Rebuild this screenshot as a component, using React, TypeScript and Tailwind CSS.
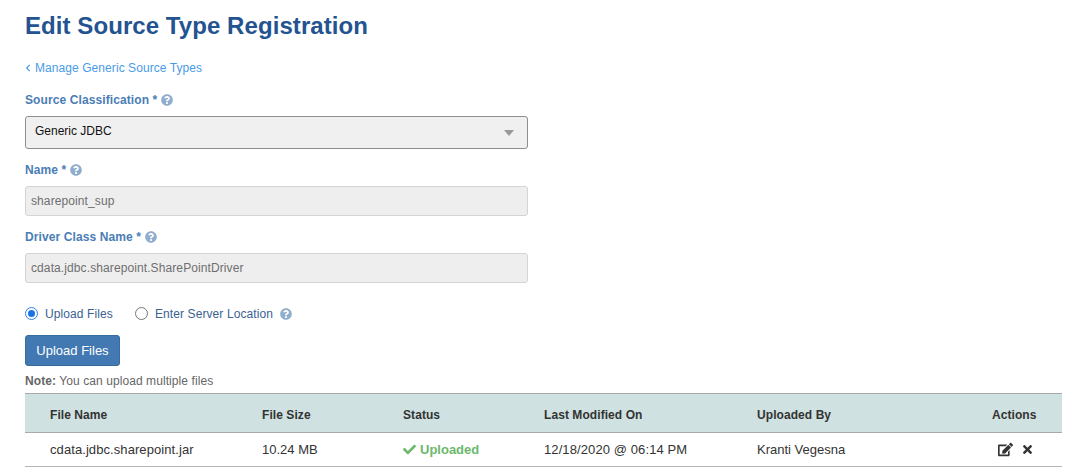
import { FaChevronLeft, FaQuestionCircle, FaCheck, FaEdit, FaTimes } from "react-icons/fa";

function Help({ className = "" }: { className?: string }) {
  return <FaQuestionCircle className={`inline-block text-[12px] text-[#8fadcc] ${className}`} />;
}

function Label({ text }: { text: string }) {
  return (
    <div className="flex h-[16px] items-center gap-[4px] text-[12px] leading-[16px] font-bold text-[#4a7db5]">
      <span className="tracking-[0.1px]">{text}</span>
      <Help />
    </div>
  );
}

function ReadOnly({ value }: { value: string }) {
  return (
    <div className="flex h-[30px] w-[503px] items-center rounded-[3px] border border-[#d4d4d4] bg-[#eeeeee] px-[5px] text-[12px] tracking-[0.1px] text-[#6f6f6f]">
      {value}
    </div>
  );
}

export default function App() {
  return (
    <div className="h-[472px] w-[1080px] overflow-hidden bg-white pt-[11px] pl-[25px] font-['Liberation_Sans',Arial,sans-serif]">
      <h1 className="h-[30px] text-[24px] leading-[30px] font-bold tracking-[0.07px] text-[#235390]">Edit Source Type Registration</h1>
      <a className="mt-[19px] flex h-[16px] items-center gap-[3px] text-[12px] leading-[16px] tracking-[0.07px] text-[#4a9be8]">
        <FaChevronLeft className="-ml-px text-[8px]" />
        <span>Manage Generic Source Types</span>
      </a>
      <div className="mt-[16px]">
        <Label text="Source Classification *" />
      </div>
      <div className="mt-[8px] flex h-[33px] w-[503px] items-center justify-between rounded-[3px] border border-[#8e8e8e] bg-[#f0f0f0] pr-[13px] pl-[9px] text-[12px] text-[#111111]">
        <span className="-mt-[3px]">Generic JDBC</span>
        <span className="h-0 w-0 border-x-[5px] border-t-[6px] border-x-transparent border-t-[#999999]" />
      </div>
      <div className="mt-[13px]">
        <Label text="Name *" />
      </div>
      <div className="mt-[8px]">
        <ReadOnly value="sharepoint_sup" />
      </div>
      <div className="mt-[13px]">
        <Label text="Driver Class Name *" />
      </div>
      <div className="mt-[8px]">
        <ReadOnly value="cdata.jdbc.sharepoint.SharePointDriver" />
      </div>
      <div className="mt-[22px] flex h-[17px] items-center text-[12px] tracking-[0.1px] text-[#3a6291]">
        <span className="flex h-[13px] w-[13px] items-center justify-center rounded-full border border-[#2f80ed] bg-white">
          <span className="h-[7px] w-[7px] rounded-full bg-[#1a73e8]" />
        </span>
        <span className="ml-[7px]">Upload Files</span>
        <span className="ml-[22px] h-[13px] w-[13px] rounded-full border border-[#767676] bg-white" />
        <span className="ml-[7px]">Enter Server Location</span>
        <Help className="ml-[7px]" />
      </div>
      <button className="mt-[13px] block h-[31px] w-[95px] rounded-[3px] border border-[#386c9f] bg-[#4279b3] text-[13px] text-white">
        Upload Files
      </button>
      <div className="mt-[8px] h-[15px] text-[12px] leading-[15px] tracking-[0.08px] text-[#666666]">
        <b>Note:</b> You can upload multiple files
      </div>
      <table className="mt-[4px] w-[1037px] table-fixed border-collapse text-[13px] text-[#333333]">
        <thead>
          <tr className="h-[39px] border-y border-[#a9a9a9] bg-[#cfe1e0] text-[12px] tracking-[0.07px]">
            <th className="w-[237px] pt-[3px] pl-[25px] text-left font-bold">File Name</th>
            <th className="w-[141px] pt-[3px] text-left font-bold">File Size</th>
            <th className="w-[141px] pt-[3px] text-left font-bold">Status</th>
            <th className="w-[213px] pt-[3px] text-left font-bold">Last Modified On</th>
            <th className="w-[235px] pt-[3px] text-left font-bold">Uploaded By</th>
            <th className="pt-[3px] text-left font-bold">Actions</th>
          </tr>
        </thead>
        <tbody>
          <tr className="h-[34px] border-b border-[#b5b5b5]">
            <td className="pl-[25px] tracking-[0.08px]">cdata.jdbc.sharepoint.jar</td>
            <td>10.24 MB</td>
            <td>
              <span className="flex items-center gap-[4px] font-bold text-[#6cb86c]">
                <FaCheck className="text-[13px]" />
                <span>Uploaded</span>
              </span>
            </td>
            <td className="tracking-[0.1px]">12/18/2020 @ 06:14 PM</td>
            <td>Kranti Vegesna</td>
            <td>
              <span className="ml-[6px] flex items-center gap-[8px] text-[#333333]">
                <FaEdit className="text-[15px]" />
                <FaTimes className="text-[13px]" />
              </span>
            </td>
          </tr>
        </tbody>
      </table>
    </div>
  );
}
